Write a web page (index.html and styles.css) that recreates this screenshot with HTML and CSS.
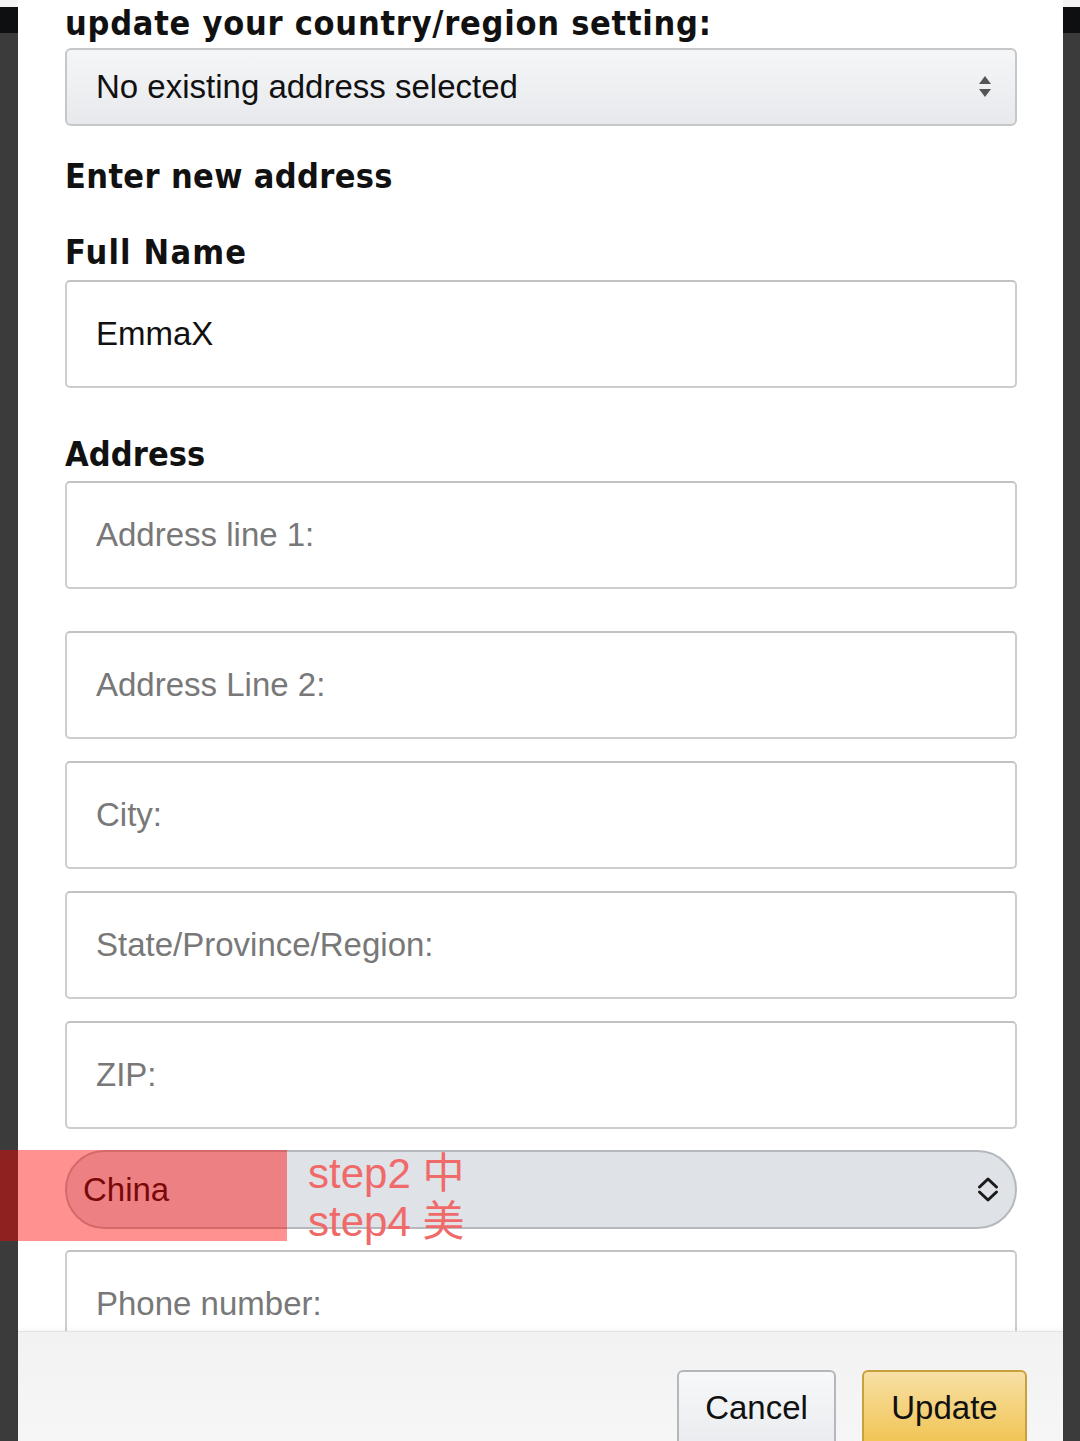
FILE: index.html
```html
<!DOCTYPE html>
<html lang="en">
<head>
<meta charset="utf-8">
<title>Update address</title>
<link rel="stylesheet" href="styles.css">
</head>
<body>
<div class="strip"><div class="strip-light"></div><div class="strip-black"></div><div class="strip-dark"></div></div>
<div class="modal">
  <div class="scroll">
    <h2 class="title">update your country/region setting:</h2>
    <div class="select select-grey">
      <span>No existing address selected</span>
      <svg class="updown" width="14" height="24" viewBox="0 0 14 24"><path d="M7 1 L13 9 L1 9 Z M1 14 L13 14 L7 22 Z" fill="#555"/></svg>
    </div>
    <h3 class="sub">Enter new address</h3>
    <h3 class="label label-name">Full Name</h3>
    <div class="input"><span class="val">EmmaX</span></div>
    <h3 class="label label-addr">Address</h3>
    <div class="input"><span class="ph">Address line 1:</span></div>
    <div class="input gap-lg"><span class="ph">Address Line 2:</span></div>
    <div class="input gap"><span class="ph">City:</span></div>
    <div class="input gap"><span class="ph">State/Province/Region:</span></div>
    <div class="input gap"><span class="ph">ZIP:</span></div>
    <div class="select select-pill">
      <span class="china">China</span>
      <svg class="chev" width="22" height="27" viewBox="0 0 22 27"><path d="M2.5 11 L11 3 L19.5 11 M2.5 16 L11 24 L19.5 16" fill="none" stroke="#1a1a1a" stroke-width="3" stroke-linecap="round" stroke-linejoin="round"/></svg>
    </div>
    <div class="input gap phone"><span class="ph">Phone number:</span></div>
  </div>
  <div class="footer">
    <button class="btn btn-cancel">Cancel</button>
    <button class="btn btn-update">Update</button>
  </div>
</div>
<div class="strip strip-right"><div class="strip-light"></div><div class="strip-black"></div><div class="strip-dark"></div></div>
<div class="highlight"></div>
<div class="note">step2 中<br>step4 美</div>
</body>
</html>
```
FILE: styles.css
```css
html, body {
  margin: 0;
  padding: 0;
}
body {
  width: 1080px;
  height: 1441px;
  overflow: hidden;
  display: flex;
  position: relative;
  background: #3b3b3b;
  font-family: "Liberation Sans", Arial, sans-serif;
}
.strip {
  width: 18px;
  display: flex;
  flex-direction: column;
  flex: none;
}
.strip-right {
  width: 17px;
}
.strip-light {
  height: 7px;
  background: #f4f4f4;
}
.strip-black {
  height: 26px;
  background: #0d0f11;
}
.strip-dark {
  flex: 1;
  background: #3b3b3b;
}
.modal {
  width: 1045px;
  flex: none;
  display: flex;
  flex-direction: column;
  background: #fff;
}
.scroll {
  height: 1331px;
  overflow: hidden;
  padding-left: 47px;
  box-sizing: border-box;
}
.title, .sub, .label {
  font-family: "DejaVu Sans Condensed", "DejaVu Sans", sans-serif;
  font-stretch: condensed;
  font-weight: bold;
  font-size: 34px;
  line-height: 40px;
  color: #111;
  margin: 0;
  white-space: nowrap;
  letter-spacing: 0.35px;
}
.title {
  margin-top: 3px;
  letter-spacing: 0.75px;
}
.sub {
  margin-top: 30px;
}
.label-name {
  margin-top: 36px;
  letter-spacing: 1.2px;
}
.label-addr {
  margin-top: 46px;
  letter-spacing: 0.1px;
}
.select {
  width: 952px;
  box-sizing: border-box;
  display: flex;
  align-items: center;
  justify-content: space-between;
}
.select-grey {
  margin-top: 5px;
  height: 78px;
  border: 2px solid #c6c7c9;
  border-radius: 6px;
  background: linear-gradient(#f5f6f8, #e7e9ec);
  padding: 0 23px 0 29px;
  font-size: 33px;
  color: #111;
}
.input {
  width: 952px;
  height: 108px;
  box-sizing: border-box;
  border: 2px solid #cdcdcd;
  border-top-color: #c2c2c2;
  border-radius: 5px;
  background: #fff;
  display: flex;
  align-items: center;
  padding-left: 29px;
  font-size: 33px;
  margin-top: 8px;
}
.label-name + .input {
  margin-top: 8px;
}
.label-addr + .input {
  margin-top: 7px;
}
.input.gap-lg {
  margin-top: 42px;
}
.input.gap {
  margin-top: 22px;
}
.val {
  color: #111;
}
.ph {
  color: #787878;
}
.select-pill {
  margin-top: 21px;
  height: 79px;
  border: 2px solid #b5b8bd;
  border-radius: 40px;
  background: #dfe2e7;
  padding: 0 16px 0 16px;
  font-size: 33px;
}
.china {
  color: #111;
}
.input.phone {
  margin-top: 21px;
}
.footer {
  flex: 1;
  background: linear-gradient(#f2f2f2, #f6f6f6);
  border-top: 1px solid #e3e3e3;
  box-shadow: 0 -2px 4px rgba(0, 0, 0, 0.04);
  display: flex;
  justify-content: flex-end;
  align-items: flex-start;
  gap: 26px;
  padding: 38px 36px 0 0;
  overflow: hidden;
  position: relative;
}
.btn {
  height: 80px;
  box-sizing: border-box;
  border-radius: 6px;
  font-family: "Liberation Sans", Arial, sans-serif;
  font-size: 33px;
  color: #111;
  padding: 0 0 4px 0;
  margin: 0;
}
.btn-cancel {
  width: 159px;
  border: 2px solid #b4b7bc;
  background: linear-gradient(#f7f8fa, #e9ebee);
}
.btn-update {
  width: 165px;
  border: 2px solid #c9a13c;
  background: linear-gradient(#f8e0a6, #f0c24e);
}
.highlight {
  position: absolute;
  left: 0;
  top: 1150px;
  width: 287px;
  height: 91px;
  background: rgba(255, 0, 0, 0.43);
}
.note {
  position: absolute;
  left: 308px;
  top: 1150px;
  font-family: "Liberation Sans", "Noto Sans CJK SC", sans-serif;
  font-size: 42px;
  line-height: 48px;
  color: #f06a6a;
}
```
